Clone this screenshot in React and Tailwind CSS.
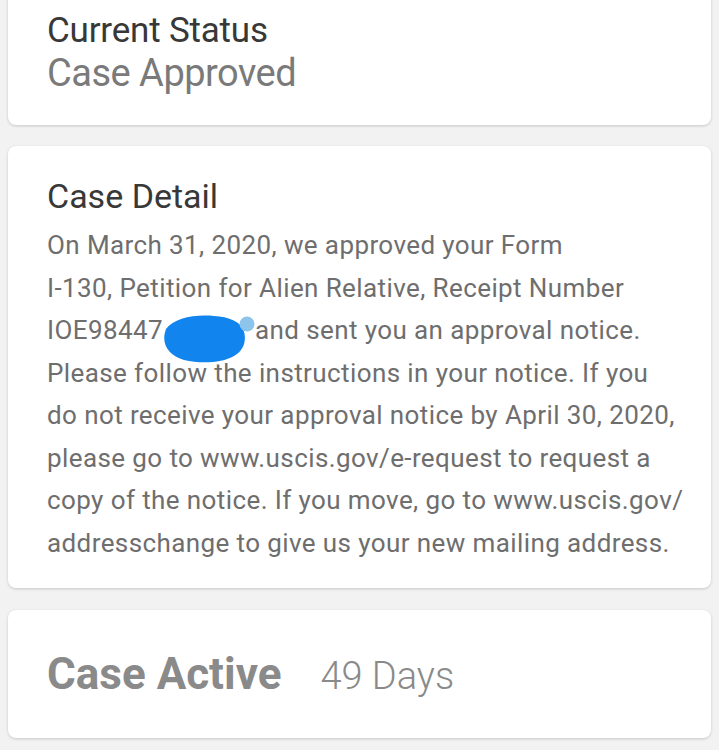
export default function App() {
  const font = { fontFamily: 'Roboto, "Liberation Sans", sans-serif' }
  return (
    <div className="min-h-screen bg-[#f2f2f2] px-2 overflow-hidden" style={font}>
      <div className="-mt-3 bg-white rounded-lg shadow-[0_1px_3px_rgba(0,0,0,0.18)] pt-[23px] pb-[30px] px-[39px]">
        <p className="text-[35px] leading-[40px] tracking-[-0.2px] text-[#383838]">Current Status</p>
        <p className="text-[38px] leading-[44px] tracking-[-0.5px] text-[#7a7a7a]">Case Approved</p>
      </div>

      <div className="mt-[21px] bg-white rounded-lg shadow-[0_1px_3px_rgba(0,0,0,0.18)] pt-[30px] pb-[24px] pl-[39px] pr-[16px]">
        <p className="text-[34px] leading-[40px] text-[#383838]">Case Detail</p>
        <p className="mt-[8px] whitespace-nowrap text-[26px] leading-[42.5px] tracking-[0.4px] text-[#6e6e6e]">
          On March 31, 2020, we approved your Form
          <br />
          I-130, Petition for Alien Relative, Receipt Number
          <br />
          IOE98447
          <span className="relative inline-block h-0 w-[92px]">
            <svg className="absolute left-[-2px] top-[-25px]" width="100" height="52" viewBox="0 0 100 52">
              <path
                d="M5 15 C 13 4, 34 0, 53 2 C 68 3, 78 7, 82 15 C 86 24, 84 36, 73 42 C 61 49, 40 50, 23 46 C 9 42, -1 31, 5 15 Z"
                fill="#1184ee"
              />
              <circle cx="86" cy="10" r="7.5" fill="#8cc4ec" />
            </svg>
          </span>
          and sent you an approval notice.
          <br />
          Please follow the instructions in your notice. If you
          <br />
          do not receive your approval notice by April 30, 2020,
          <br />
          please go to www.uscis.gov/e-request to request a
          <br />
          copy of the notice. If you move, go to www.uscis.gov/
          <br />
          addresschange to give us your new mailing address.
        </p>
      </div>

      <div className="mt-[22px] h-[128px] bg-white rounded-lg shadow-[0_1px_3px_rgba(0,0,0,0.18)] px-[39px] flex items-center">
        <div className="flex items-baseline gap-[39px]">
          <span className="text-[44px] leading-none font-bold text-[#8a8a8a]">Case Active</span>
          <span className="text-[38px] leading-none font-light text-[#8a8a8a]">49 Days</span>
        </div>
      </div>
    </div>
  )
}
